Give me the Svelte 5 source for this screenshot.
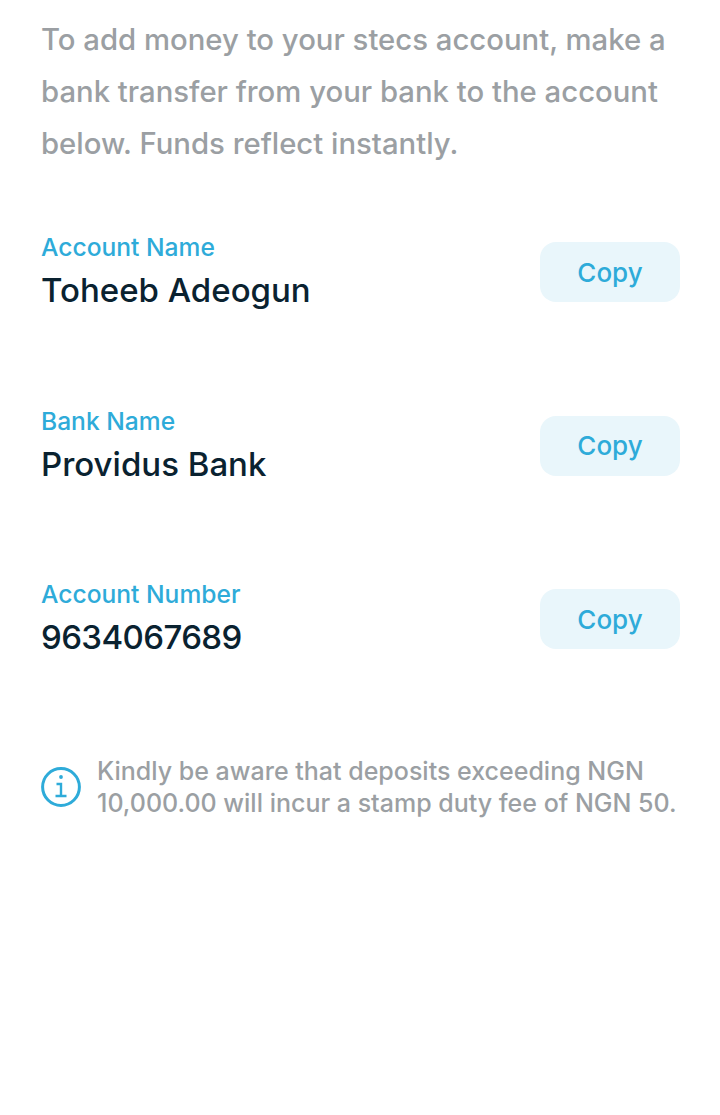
<script>
  const rows = [
    { label: 'Account Name', value: 'Toheeb Adeogun', numeric: false },
    { label: 'Bank Name', value: 'Providus Bank', numeric: false },
    { label: 'Account Number', value: '9634067689', numeric: true }
  ];
</script>

<main class="page">
  <p class="intro">To add money to your stecs account, make a bank transfer from your bank to the account below. Funds reflect instantly.</p>
  <div class="rows">
    {#each rows as r}
      <div class="row">
        <div class="info">
          <div class="label">{r.label}</div>
          <div class="value" class:numeric={r.numeric}>{r.value}</div>
        </div>
        <button class="copy">Copy</button>
      </div>
    {/each}
  </div>
  <div class="note">
    <svg class="icon" width="40" height="40" viewBox="0 0 40 40" fill="none" stroke="#2eabd9" stroke-width="3">
      <circle cx="20" cy="20" r="18.4" />
      <circle cx="20" cy="10" r="1.9" fill="#2eabd9" stroke="none" />
      <path d="M15.5 17h4.5v12M14.5 29h11" stroke-width="2.4" />
    </svg>
    <p>Kindly be aware that deposits exceeding NGN 10,000.00 will incur a stamp duty fee of NGN 50.</p>
  </div>
</main>

<style>
  :global(body) { margin: 0; background: #fff; }
  .page {
    box-sizing: border-box;
    width: 720px;
    height: 1115px;
    padding: 14px 40px 0 41px;
    font-family: Inter, "Noto Sans", sans-serif;
  }
  .intro {
    margin: 0;
    font-size: 29.3px;
    line-height: 52px;
    color: #9b9fa3;
    font-weight: 500;
  }
  .rows { margin-top: 42px; display: flex; flex-direction: column; gap: 53.5px; }
  .row { display: flex; justify-content: space-between; align-items: center; height: 120px; }
  .info { display: flex; flex-direction: column; gap: 5px; padding-bottom: 1px; }
  .label { font-size: 24.6px; line-height: 32px; color: #2eabd9; font-weight: 500; }
  .value { font-size: 33px; line-height: 44px; color: #0a2230; font-weight: 500; }
  .numeric { letter-spacing: -0.6px; }
  .copy {
    width: 140px;
    height: 60px;
    padding: 0;
    border: 0;
    border-radius: 16px;
    background: #e9f6fb;
    color: #2eabd9;
    font: 500 26px Inter, "Noto Sans", sans-serif;
  }
  .note { display: flex; align-items: center; gap: 16px; margin-top: 76px; }
  .icon { flex: none; }
  .note p { margin: 0; font-size: 25px; line-height: 32px; color: #9b9fa3; font-weight: 500; }
</style>
